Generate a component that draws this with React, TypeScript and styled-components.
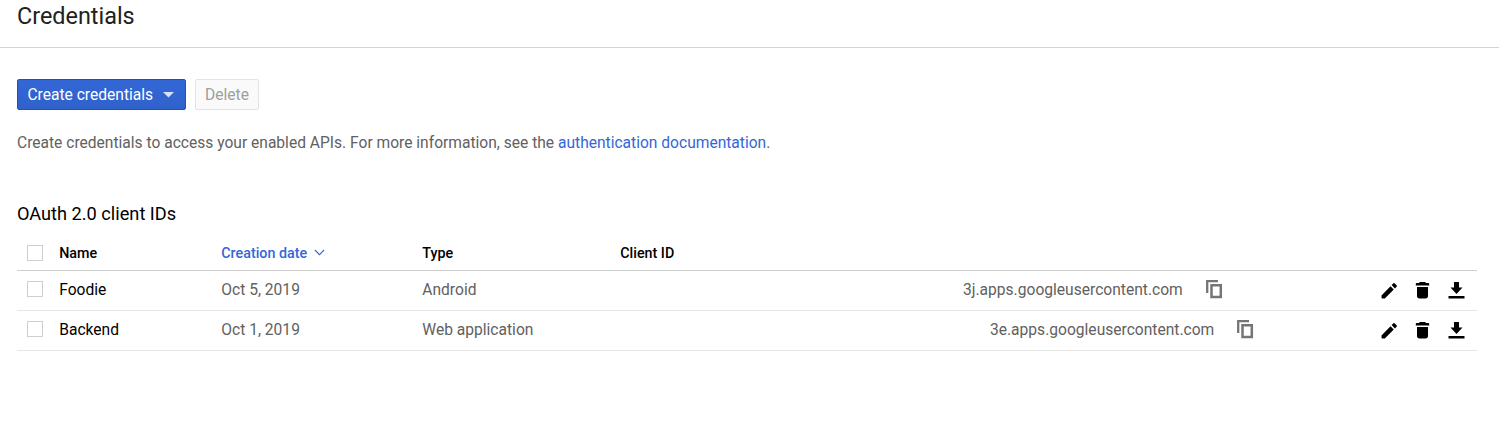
import React from 'react';
import styled, { createGlobalStyle } from 'styled-components';

const Global = createGlobalStyle`
  * { box-sizing: border-box; }
  body { margin: 0; background: #fff; font-family: Roboto, sans-serif; font-size: 15.6px; color: #616161; }
`;

const Header = styled.header`
  height: 48px;
  padding: 2px 17px 0;
  border-bottom: 1px solid #d5d5d5;
`;
const Title = styled.h1`
  margin: 0;
  font-size: 23.4px;
  line-height: 28px;
  font-weight: 400;
  color: #212121;
`;
const Main = styled.main`
  padding: 31px 22px 0 17px;
`;
const Toolbar = styled.div`
  display: flex;
  gap: 9px;
`;
const Button = styled.button<{ $primary?: boolean }>`
  display: flex;
  align-items: center;
  height: 31px;
  padding: 0 ${p => (p.$primary ? 9.4 : 9)}px;
  width: ${p => (p.$primary ? 169 : 64)}px;
  border: 1px solid ${p => (p.$primary ? '#1a53c5' : '#e3e3e3')};
  border-radius: 2px;
  background: ${p => (p.$primary ? 'linear-gradient(#3367d6, #3062cc)' : '#fafafa')};
  color: ${p => (p.$primary ? '#fff' : '#9e9e9e')};
  font: 400 15.6px Roboto, sans-serif;
  white-space: nowrap;
`;
const Caret = styled.svg`
  margin-left: 10px;
  flex: none;
`;
const Intro = styled.p`
  margin: 23px 0 0;
  font-size: 15.59px;
  line-height: 20px;
`;
const Link = styled.a`
  color: #3367d6;
`;
const Section = styled.h2`
  margin: 50px 0 0;
  font-size: 18.2px;
  line-height: 22px;
  font-weight: 400;
  color: #000;
`;
const Row = styled.div<{ $head?: boolean }>`
  display: grid;
  grid-template-columns: 42.200px 162.100px 201px 198px 342.700px 1fr 104px;
  align-items: center;
  height: ${p => (p.$head ? 46 : 40)}px;
  padding-top: ${p => (p.$head ? 10 : 0)}px;
  padding-bottom: ${p => (p.$head ? 0 : 3)}px;
  border-bottom: 1px solid ${p => (p.$head ? '#cfcfcf' : '#e6e6e6')};
`;
const Check = styled.span`
  width: 16px;
  height: 16px;
  margin-left: 10px;
  border: 1px solid #cfcfcf;
`;
const HeadCell = styled.span<{ $active?: boolean }>`
  display: flex;
  align-items: center;
  gap: 7px;
  font-size: 14.3px;
  font-weight: 500;
  color: ${p => (p.$active ? '#3367d6' : '#000')};
`;
const Cell = styled.span<{ $strong?: boolean }>`
  padding-top: 2px;
  color: ${p => (p.$strong ? '#000' : '#616161')};
`;
const ClientId = styled.span<{ $indent: number }>`
  display: flex;
  align-items: center;
  gap: 23px;
  height: 20px;
  padding-left: ${p => p.$indent}px;
`;
const Actions = styled.span`
  display: flex;
  gap: 16.5px;
  padding: 2px 0 0 7.5px;
`;

const Copy = () => (
  <svg width="17" height="19" viewBox="0 0 17 19" fill="none" stroke="#757575">
    <path d="M1.200 13V1.200H12" strokeWidth="2.3" />
    <path d="M5.500 5.300h9.300v11.600H5.500z" strokeWidth="2.5" />
  </svg>
);
const Edit = () => (
  <svg width="17" height="17" viewBox="0 0 17 17">
    <path d="M.5 13.400V15.600c0 .6.3.9.9.9h2.400L12.800 7.500 9.500 4.200zM13.900 6.400l1.700-1.700c.5-.5.5-1 0-1.500l-1.800-1.800c-.5-.5-1-.5-1.500 0l-1.700 1.700z" />
  </svg>
);
const Trash = () => (
  <svg width="17" height="17" viewBox="0 0 17 17">
    <path d="M5 1c.4-.8.8-1 1.500-1h4c.7 0 1.100.2 1.500 1h2c.8 0 1.200.4 1.200 1v1.600H1.800V2c0-.6.4-1 1.200-1zM3 5h11v9c0 1.600-.9 2.500-2.500 2.500h-6C3.900 16.500 3 15.600 3 14z" />
  </svg>
);
const Download = () => (
  <svg width="17" height="17" viewBox="0 0 17 17">
    <path d="M6 0h5v5.500h3.500L8.500 12l-6-6.500H6zM.5 14h16v2.500H.5z" />
  </svg>
);

const clients = [
  { name: 'Foodie', date: 'Oct 5, 2019', type: 'Android', id: '3j.apps.googleusercontent.com', indent: 0 },
  { name: 'Backend', date: 'Oct 1, 2019', type: 'Web application', id: '3e.apps.googleusercontent.com', indent: 27 },
];

export default function App() {
  return (
    <>
      <Global />
      <Header><Title>Credentials</Title></Header>
      <Main>
        <Toolbar>
          <Button $primary>
            Create credentials
            <Caret width="11" height="6" viewBox="0 0 11 6"><path d="M0 0h11L5.500 5.500z" fill="#d6e1f7" /></Caret>
          </Button>
          <Button disabled>Delete</Button>
        </Toolbar>
        <Intro>
          Create credentials to access your enabled APIs. For more information, see the <Link>authentication documentation</Link>.
        </Intro>
        <Section>OAuth 2.0 client IDs</Section>
        <Row $head>
          <Check />
          <HeadCell>Name</HeadCell>
          <HeadCell $active>
            Creation date
            <svg width="11" height="7" viewBox="0 0 11 7" fill="none" stroke="#3367d6" strokeWidth="1.1"><path d="M.9 1l4.600 4.600L10.100 1" /></svg>
          </HeadCell>
          <HeadCell>Type</HeadCell>
          <HeadCell>Client ID</HeadCell>
        </Row>
        {clients.map(c => (
          <Row key={c.name}>
            <Check />
            <Cell $strong>{c.name}</Cell>
            <Cell>{c.date}</Cell>
            <Cell>{c.type}</Cell>
            <span />
            <ClientId $indent={c.indent}><Cell>{c.id}</Cell><Copy /></ClientId>
            <Actions><Edit /><Trash /><Download /></Actions>
          </Row>
        ))}
      </Main>
    </>
  );
}
